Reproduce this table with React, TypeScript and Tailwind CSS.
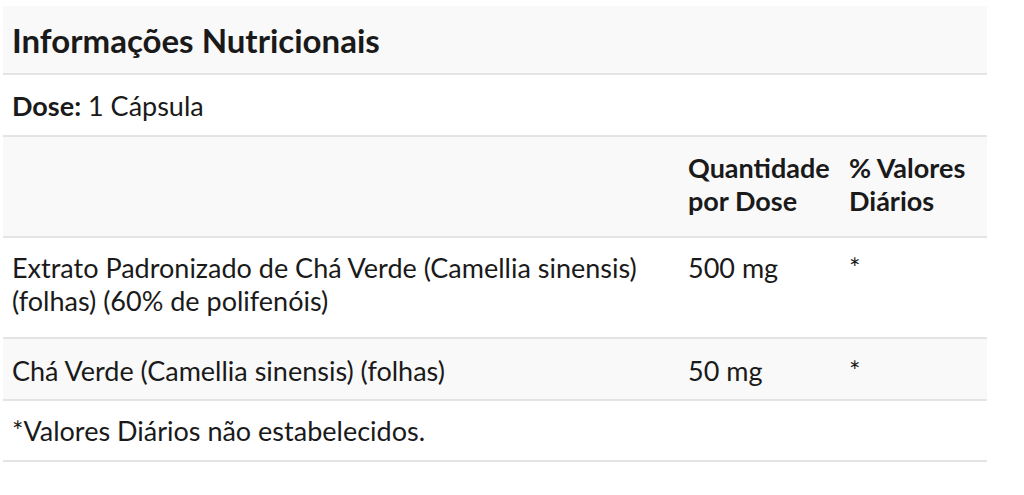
import React from "react";

export default function App() {
  const cell = "px-[9px]";
  return (
    <div className="w-[1024px] h-[495px] bg-white pt-[6px] pl-[3px]" style={{ fontFamily: "Lato, 'Noto Sans', sans-serif" }}>
      <div className="w-[984px] text-[27px] leading-[33px] text-[#1a1a1a]">
        <div className="bg-[#f9f9f9] border-b-2 border-[#e4e4e4] h-[69px] flex items-center px-[9px]">
          <h2 className="text-[33px] leading-[40px] font-bold">Informações Nutricionais</h2>
        </div>
        <div className="border-b-2 border-[#e4e4e4] h-[62px] flex items-center px-[9px]">
          <span className="font-bold">Dose:</span>&nbsp;1 Cápsula
        </div>
        <div className="grid grid-cols-[676px_161px_1fr] bg-[#f9f9f9] border-b-2 border-[#e4e4e4] font-bold h-[101px] pt-[14px]">
          <div className={cell}></div>
          <div className={cell}>Quantidade por Dose</div>
          <div className={cell}>% Valores Diários</div>
        </div>
        <div className="grid grid-cols-[676px_161px_1fr] border-b-2 border-[#e4e4e4] h-[101px] pt-[13px]">
          <div className={cell}>Extrato Padronizado de Chá Verde (Camellia sinensis) (folhas) (60% de polifenóis)</div>
          <div className={cell}>500 mg</div>
          <div className={cell}>*</div>
        </div>
        <div className="grid grid-cols-[676px_161px_1fr] bg-[#f9f9f9] border-b-2 border-[#e4e4e4] h-[62px] pt-[15px]">
          <div className={cell}>Chá Verde (Camellia sinensis) (folhas)</div>
          <div className={cell}>50 mg</div>
          <div className={cell}>*</div>
        </div>
        <div className="border-b-2 border-[#e4e4e4] h-[61px] flex items-center px-[9px]">
          *Valores Diários não estabelecidos.
        </div>
      </div>
    </div>
  );
}
